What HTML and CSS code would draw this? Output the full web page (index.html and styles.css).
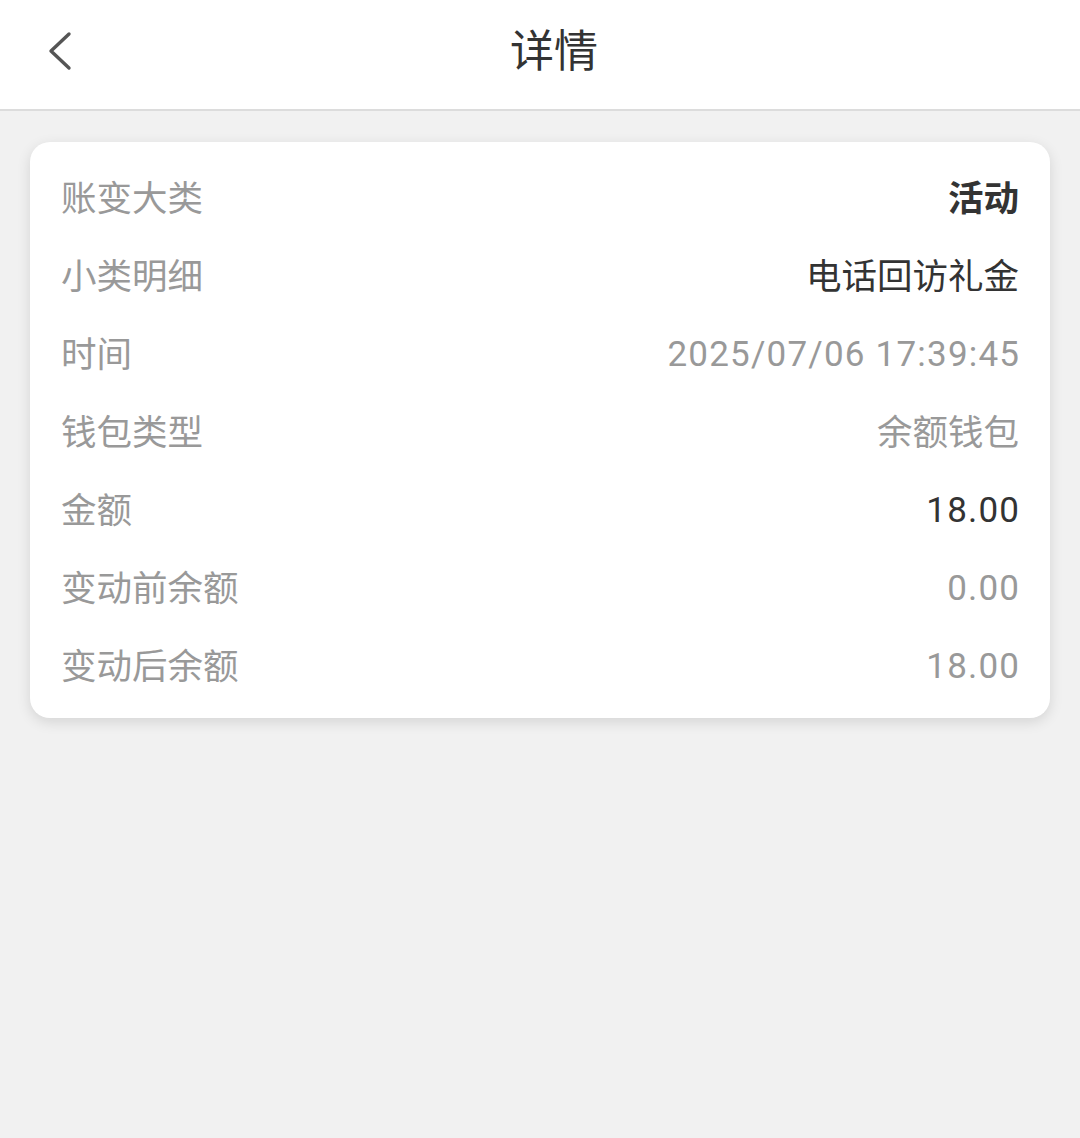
FILE: index.html
```html
<!DOCTYPE html>
<html lang="zh-CN">
<head>
    <meta charset="UTF-8">
    <title>详情</title>
    <link rel="stylesheet" href="styles.css">
</head>
<body>
    <div class="header">
        <a class="back" href="#">
            <svg width="28" height="40" viewBox="0 0 28 40">
                <path d="M23 3 L5 20 L23 37" fill="none" stroke="#555" stroke-width="3.4" stroke-linecap="round" stroke-linejoin="round"/>
            </svg>
        </a>
        <h1>详情</h1>
    </div>

    <div class="card">
        <div class="row">
            <span class="label">账变大类</span>
            <span class="value strong">活动</span>
        </div>
        <div class="row">
            <span class="label">小类明细</span>
            <span class="value dark">电话回访礼金</span>
        </div>
        <div class="row">
            <span class="label">时间</span>
            <span class="value num">2025/07/06 17:39:45</span>
        </div>
        <div class="row">
            <span class="label">钱包类型</span>
            <span class="value">余额钱包</span>
        </div>
        <div class="row">
            <span class="label">金额</span>
            <span class="value num dark">18.00</span>
        </div>
        <div class="row">
            <span class="label">变动前余额</span>
            <span class="value num">0.00</span>
        </div>
        <div class="row">
            <span class="label">变动后余额</span>
            <span class="value num">18.00</span>
        </div>
    </div>
</body>
</html>
```

FILE: styles.css
```css
body {
    font-family: Roboto, "Noto Sans CJK SC", sans-serif;
    background-color: #f1f1f1;
    margin: 0;
    min-height: 100vh;
}

.header {
    height: 109px;
    background-color: white;
    border-bottom: 2px solid #dcdcdc;
    display: flex;
    align-items: center;
    justify-content: center;
    position: relative;
}

.header h1 {
    margin: 0 0 14px 28px;
    font-size: 44px;
    font-weight: 400;
    color: #333;
}

.back {
    position: absolute;
    left: 46px;
    top: 31px;
    display: flex;
}

.card {
    background-color: white;
    margin: 31px 30px 0;
    padding: 14px 31px 16px;
    border-radius: 20px;
    box-shadow: 0 4px 14px rgba(0, 0, 0, 0.12);
}

.row {
    height: 78px;
    display: flex;
    align-items: center;
    justify-content: space-between;
    font-size: 35.5px;
}

.label {
    color: #999;
}

.value {
    color: #999;
}

.value.num {
    font-size: 35px;
    letter-spacing: 1.2px;
    margin-right: -1.2px;
    padding-top: 7px;
}

.value.dark {
    color: #333;
}

.value.strong {
    color: #333;
    font-weight: 700;
}
```
